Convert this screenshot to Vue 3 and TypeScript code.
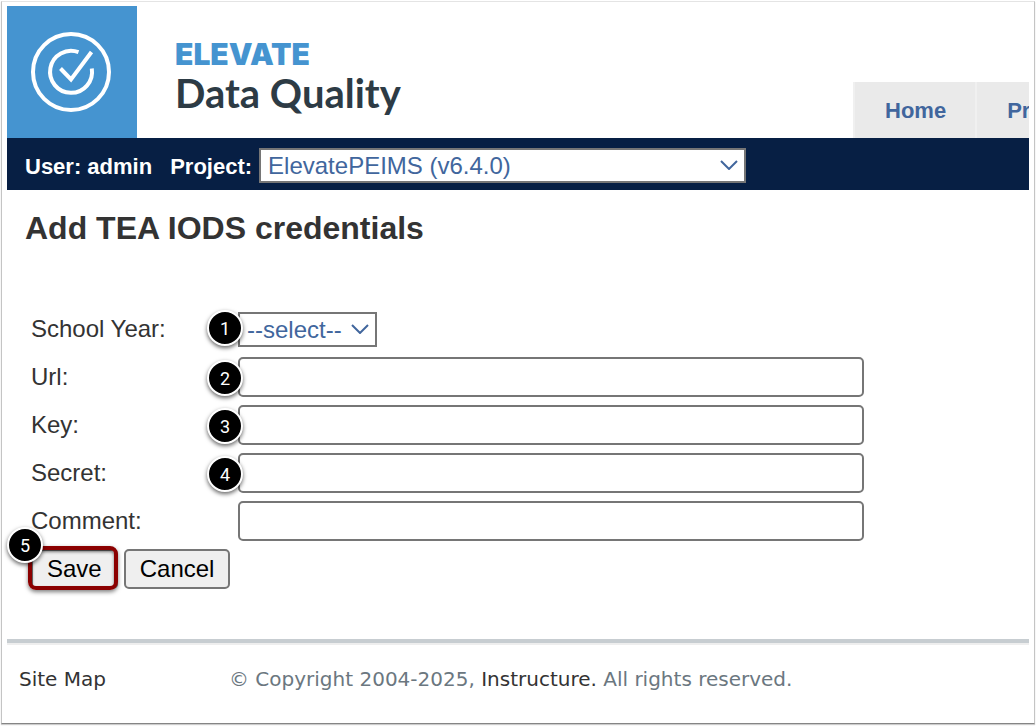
<script setup lang="ts">
import { ref } from 'vue'

interface Field {
  id: string
  label: string
  step?: number
}

const project = ref('peims')
const schoolYear = ref('')
const fields: Field[] = [
  { id: 'url', label: 'Url:', step: 2 },
  { id: 'key', label: 'Key:', step: 3 },
  { id: 'secret', label: 'Secret:', step: 4 },
  { id: 'comment', label: 'Comment:' },
]
const values = ref<Record<string, string>>({ url: '', key: '', secret: '', comment: '' })
</script>

<template>
  <div class="frame">
    <header class="masthead">
      <div class="logo">
        <svg viewBox="0 0 130 132" width="130" height="132" fill="none" stroke="#fff" stroke-width="4" aria-hidden="true">
          <circle cx="64" cy="66" r="38" />
          <path d="M71.5 46.2A21 21 0 1 0 84.8 62.5" />
          <path d="M53.5 62.5 64 73.5 84.5 46" />
        </svg>
      </div>
      <div class="brand">
        <span class="brand-top">ELEVATE</span>
        <span class="brand-main">Data Quality</span>
      </div>
      <nav class="tabs">
        <a href="#home">Home</a>
        <a href="#pr">Pr</a>
      </nav>
    </header>

    <div class="bar">
      <span class="user">User: admin</span>
      <label for="project">Project:</label>
      <div class="picker project">
        <select id="project" v-model="project">
          <option value="peims">ElevatePEIMS (v6.4.0)</option>
        </select>
        <svg class="chevron" viewBox="0 0 18 10" width="18" height="10" aria-hidden="true"><path d="M1 1l8 8 8-8" /></svg>
      </div>
    </div>

    <main>
      <h1>Add TEA IODS credentials</h1>
      <form @submit.prevent>
        <div class="row">
          <label for="year">School Year:</label>
          <div class="field">
            <div class="picker year">
              <select id="year" v-model="schoolYear">
                <option value="">--select--</option>
              </select>
              <svg class="chevron" viewBox="0 0 18 10" width="18" height="10" aria-hidden="true"><path d="M1 1l8 8 8-8" /></svg>
            </div>
            <span class="badge">1</span>
          </div>
        </div>
        <div v-for="f in fields" :key="f.id" class="row">
          <label :for="f.id">{{ f.label }}</label>
          <div class="field">
            <input :id="f.id" v-model="values[f.id]" type="text" />
            <span v-if="f.step" class="badge">{{ f.step }}</span>
          </div>
        </div>
        <div class="actions">
          <div class="save">
            <button type="submit">Save</button>
            <span class="highlight"></span>
            <span class="badge">5</span>
          </div>
          <button type="button">Cancel</button>
        </div>
      </form>
    </main>

    <footer>
      <a class="sitemap" href="#sitemap">Site Map</a>
      <p>© Copyright 2004-2025, <a href="#instructure">Instructure.</a> All rights reserved.</p>
    </footer>
  </div>
</template>

<style>
body {
  background: #fff;
}
</style>

<style scoped>
.frame {
  box-sizing: border-box;
  min-height: calc(100vh - 3px);
  margin: 1px 1px 2px;
  padding: 4px 5px 0;
  border: 1px solid #c4c4c4;
  border-top-color: #e4e4e4;
  border-bottom-color: #858585;
  box-shadow: 0 1px 1px #ccc;
  background: #fff;
  color: #333;
  font: 24px/28px "Liberation Sans", Arial, sans-serif;
}
a {
  color: inherit;
  text-decoration: none;
}
.masthead {
  display: flex;
  height: 132px;
}
.logo {
  flex: none;
  width: 130px;
  background: #4594d0;
}
.logo svg {
  display: block;
}
.brand {
  display: flex;
  flex-direction: column;
  flex: 1;
  padding: 31px 0 0 38px;
}
.brand-top {
  color: #4594d0;
  font: 900 30px/34px Inter, sans-serif;
}
.brand-main {
  color: #2d3b45;
  font: 700 40px/44px Lato, sans-serif;
}
.tabs {
  display: flex;
  flex: 0 0 176px;
  align-self: flex-end;
  overflow: hidden;
}
.tabs a {
  flex: none;
  padding: 1px 29px 0 30px;
  border-left: 2px solid #f0f0f0;
  background: #eaeaea;
  color: #41669d;
  font-size: 22px;
  font-weight: 700;
  line-height: 55px;
}
.bar {
  display: flex;
  align-items: center;
  height: 52px;
  padding: 2px 18px 0;
  box-sizing: border-box;
  background: #071f44;
  color: #fff;
  font-size: 22px;
  font-weight: 700;
}
.bar > span,
.bar > label {
  padding-top: 3px;
}
.user {
  margin-right: 18px;
}
.picker {
  position: relative;
}
.project {
  width: 487px;
  margin-left: 7px;
}
.year {
  width: 139px;
}
select {
  display: block;
  box-sizing: border-box;
  width: 100%;
  height: 35px;
  margin: 0;
  padding: 1px 36px 0 7px;
  border: 2px solid #767676;
  border-radius: 0;
  background: #fff;
  color: #41669d;
  font: 24px/28px "Liberation Sans", Arial, sans-serif;
  appearance: none;
}
.year select {
  padding-right: 0;
}
.chevron {
  position: absolute;
  top: 12px;
  right: 8px;
  fill: none;
  stroke: #41669d;
  stroke-width: 2;
  pointer-events: none;
}
main {
  padding: 18px 18px 50px;
}
h1 {
  margin: 0;
  font-size: 32px;
  line-height: 40px;
}
form {
  display: grid;
  gap: 8px;
  margin: 61px 0 0 6px;
}
.row {
  display: grid;
  grid-template-columns: 207px minmax(0, 626px);
  align-items: center;
  min-height: 40px;
}
.field {
  position: relative;
}
input {
  display: block;
  box-sizing: border-box;
  width: 100%;
  height: 40px;
  padding: 0 8px;
  border: 2px solid #767676;
  border-radius: 5px;
  background: #fff;
  font: inherit;
}
.badge {
  position: absolute;
  top: 3px;
  left: -31px;
  box-sizing: border-box;
  width: 36px;
  height: 36px;
  border: 2px solid #fff;
  border-radius: 50%;
  background: #000;
  box-shadow: 0 2px 4px rgba(0, 0, 0, 0.6);
  color: #fff;
  font: 18px/33px Roboto, sans-serif;
  text-align: center;
}
.year + .badge {
  top: -2px;
}
.actions {
  display: flex;
  gap: 6px;
}
.save {
  position: relative;
}
button {
  display: block;
  height: 40px;
  margin: 0;
  padding: 0 14px;
  border: 2px solid #767676;
  border-radius: 5px;
  background: #efefef;
  color: #000;
  font: inherit;
}
.highlight {
  position: absolute;
  inset: -3px 0 -1px -3px;
  border: 4px solid #8b0000;
  border-radius: 8px;
  box-shadow: 0 2px 4px rgba(0, 0, 0, 0.5), inset 0 2px 3px rgba(0, 0, 0, 0.5);
  pointer-events: none;
}
.save .badge {
  top: -22px;
  left: -24px;
}
footer {
  display: flex;
  padding: 23px 12px 29px;
  border-top: 4px solid #c7cdd1;
  box-shadow: inset 0 2px #eee;
  font: 20px/26px "DejaVu Sans", Verdana, sans-serif;
}
.sitemap {
  flex: 0 0 210px;
}
footer p {
  margin: 0;
  color: #6b7780;
}
footer p a {
  color: #333;
}
</style>
